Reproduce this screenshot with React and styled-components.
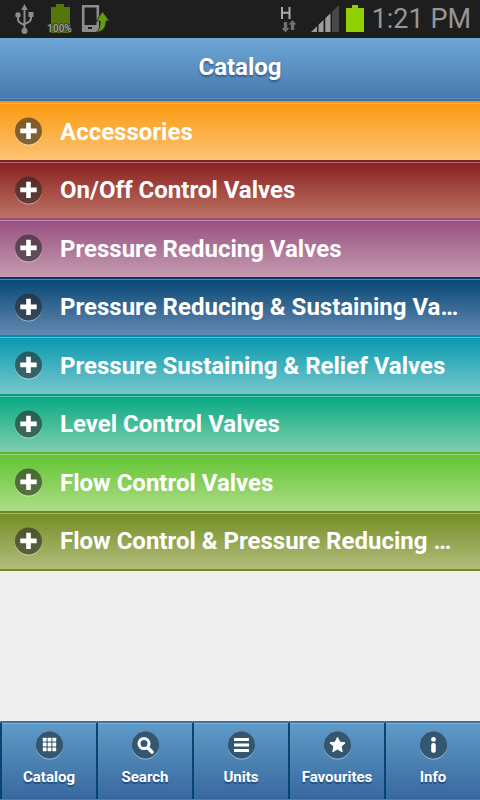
import React, { useState } from "react";
import styled, { createGlobalStyle } from "styled-components";

const GlobalStyle = createGlobalStyle`
  *, *::before, *::after { box-sizing: border-box; }
  html, body { margin: 0; padding: 0; }
  body { background: #efefef; font-family: Roboto, "Noto Sans", sans-serif; }
`;

const Screen = styled.div`
  display: flex;
  flex-direction: column;
  min-height: 100vh;
  background: #efefef;
`;

const StatusBar = styled.div`
  display: flex;
  align-items: center;
  justify-content: space-between;
  height: 38px;
  padding: 0 9px 0 14px;
  background: #1e1e1e;
`;

const StatusGroup = styled.div`
  display: flex;
  align-items: center;
  gap: ${(p) => p.$gap}px;
`;

const Clock = styled.time`
  color: #969696;
  font-size: 27px;
  line-height: 38px;
  font-weight: 400;
  white-space: nowrap;
`;

const Header = styled.header`
  display: flex;
  align-items: center;
  justify-content: center;
  height: 63px;
  padding-bottom: 3px;
  background: linear-gradient(#6da7d5, #4779ad);
  border-bottom: 2px solid #426d9f;
  box-shadow: inset 0 -1px 0 #5886b8;
`;

const Title = styled.h1`
  margin: 0;
  color: #fff;
  font-size: 24px;
  line-height: 28px;
  font-weight: 700;
  text-shadow: 0 2px 2px rgba(20, 50, 90, 0.5);
`;

const List = styled.ul`
  flex: 1;
  margin: 0;
  padding: 0;
  list-style: none;
`;

const Item = styled.li`
  height: 58px;
  &:nth-child(odd) { height: 59px; }
  &:last-child { height: 60px; border-bottom: 2px solid #768b27; }
`;

const Row = styled.button`
  display: flex;
  align-items: center;
  gap: 17px;
  width: 100%;
  height: 100%;
  padding: 0 16px 0 14px;
  border: 0;
  border-top: 2px solid ${(p) => p.$edge};
  background: linear-gradient(${(p) => p.$from}, ${(p) => p.$to});
  box-shadow: inset 0 1px 0 rgba(255, 255, 255, 0.35);
  color: #fff;
  font: 700 24px/28px Roboto, "Noto Sans", sans-serif;
  text-align: left;
  cursor: pointer;
`;

const RowLabel = styled.span`
  flex: 1;
  min-width: 0;
  overflow: hidden;
  text-overflow: ellipsis;
  white-space: nowrap;
`;

const TabBar = styled.nav`
  display: grid;
  grid-template-columns: repeat(5, 1fr);
  height: 79px;
  border-top: 2px solid #41709f;
  border-bottom: 1px solid #487dad;
`;

const Tab = styled.button`
  display: flex;
  flex-direction: column;
  align-items: center;
  gap: 7px;
  min-width: 0;
  padding: 8px 0 0;
  border: 0;
  border-left: 2px solid #07466d;
  background: linear-gradient(#5f9bc8, #38689f);
  box-shadow: inset 0 1px 0 #83b1d5;
  color: #fff;
  font: 700 15px/20px Roboto, "Noto Sans", sans-serif;
  text-shadow: 0 2px 1px #204b80;
  cursor: pointer;
`;

const Icon = styled.svg`
  display: block;
  flex: none;
`;

function Disc({ children, fill = "rgba(38,38,36,.58)" }) {
  return (
    <Icon width="29" height="29" viewBox="0 0 29 29" aria-hidden="true">
      <path d="M1 14a13.5 13.5 0 0 0 27 0v1a13.5 13.5 0 0 1-27 0z" fill="rgba(255,255,255,.5)" />
      <circle cx="14.5" cy="14" r="13.5" fill={fill} />
      {children}
    </Icon>
  );
}

const glyphs = {
  grid: [7.8, 12.6, 17.4].flatMap((y) =>
    [7.8, 12.6, 17.4].map((x) => <rect key={`${x}-${y}`} x={x} y={y - 1} width="3.8" height="3.8" rx=".4" fill="#fff" />)
  ),
  search: (
    <g fill="none" stroke="#fff" strokeLinecap="round">
      <circle cx="13" cy="12.6" r="5" strokeWidth="3" />
      <path d="M17 17l4 4" strokeWidth="3.6" />
    </g>
  ),
  bars: <path d="M7 8.5h15M7 14h15M7 19.5h15" stroke="#fff" strokeWidth="3" />,
  star: (
    <path
      d="M14.5 6.2l2.3 5 5.3.6-4 3.6 1.1 5.4-4.7-2.7-4.7 2.7 1.1-5.4-4-3.6 5.3-.6z"
      fill="#fff" stroke="#fff" strokeWidth="1" strokeLinejoin="round"
    />
  ),
  info: (
    <g fill="#fff">
      <circle cx="14.5" cy="8.4" r="2.4" />
      <rect x="12.2" y="12" width="4.6" height="9.8" rx="2" />
    </g>
  ),
};

function UsbIcon() {
  return (
    <Icon width="21" height="32" viewBox="0 0 21 32" aria-hidden="true">
      <g fill="none" stroke="#8c8c8c" strokeWidth="2">
        <path d="M10.5 5v22M4 13v3q0 3 3 4.3l3.5 1.7M17 12v3q0 3-3 4.3l-3.5 1.7" />
      </g>
      <path d="M10.5 1l3.3 6H7.2z" fill="#8c8c8c" />
      <circle cx="4" cy="12" r="2.7" fill="#8c8c8c" />
      <path d="M14.5 9h5v5h-5z" fill="#8c8c8c" />
      <circle cx="10.5" cy="28" r="3" fill="#8c8c8c" />
    </Icon>
  );
}

function BatteryPercentIcon() {
  return (
    <Icon width="27" height="32" viewBox="0 0 27 32" role="img" aria-label="Battery 100%">
      <path d="M10 1h8v3h6v26H5V4h5z" fill="#54770d" />
      <text x="13.5" y="29" textAnchor="middle" fill="#a3a3a3" stroke="#353b29" strokeWidth="1.5" paintOrder="stroke" fontFamily="Roboto, sans-serif" fontWeight="500" fontSize="10">100%</text>
    </Icon>
  );
}

function TransferIcon() {
  return (
    <Icon width="30" height="32" viewBox="0 0 30 32" aria-hidden="true">
      <path d="M3.2 3.2h14.6v24.6H3.2z" fill="none" stroke="#8c8c8c" strokeWidth="2.6" />
      <path d="M3 22h15v6H3z" fill="#8c8c8c" />
      <path d="M8 24h4v2H8z" fill="#1e1e1e" />
      <path d="M22.5 8.5l7 9.5h-3.4c0 6.5-3 10.6-10 11.4 3.6-2.8 4-5.6 4-11.4h-4z" fill="#679c12" stroke="#1e1e1e" strokeWidth=".8" />
    </Icon>
  );
}

function NetworkIcon() {
  return (
    <Icon width="18" height="32" viewBox="0 0 18 32" aria-hidden="true">
      <path d="M2 4v12M9.5 4v12M2 9.8h7.5" stroke="#ababab" strokeWidth="2" fill="none" />
      <path d="M3.8 19h3.4v6H9.5L5.5 29.5 1.5 25h2.3zM10.8 27h3.4v-5.5H16.5L12.5 17 8.5 21.5h2.3z" fill="#707070" />
    </Icon>
  );
}

function SignalIcon() {
  return (
    <Icon width="28" height="32" viewBox="0 0 28 32" aria-hidden="true">
      <path d="M0 29l6-5.8V29zM7.5 29v-7.2l5-4.9V29zM14.3 29V15.2l5.2-5V29z" fill="#9c9c9c" />
      <path d="M21 29V8.7L28 2v27z" fill="#474747" />
    </Icon>
  );
}

function BatteryIcon() {
  return (
    <Icon width="18" height="32" viewBox="0 0 18 32" aria-hidden="true">
      <path d="M6 2h6v3h6v24H0V5h6z" fill="#91d002" />
    </Icon>
  );
}

const categories = [
  { name: "Accessories", edge: "#f79312", from: "#fb9910", to: "#fcc373" },
  { name: "On/Off Control Valves", edge: "#801c20", from: "#892020", to: "#bd7365" },
  { name: "Pressure Reducing Valves", edge: "#914f79", from: "#985080", to: "#c49bb0" },
  { name: "Pressure Reducing & Sustaining Va…", edge: "#073b65", from: "#084775", to: "#6389b1" },
  { name: "Pressure Sustaining & Relief Valves", edge: "#078fa5", from: "#069ab0", to: "#79c7cc" },
  { name: "Level Control Valves", edge: "#079d78", from: "#06a982", to: "#80ceae" },
  { name: "Flow Control Valves", edge: "#58b733", from: "#61c332", to: "#addd87" },
  { name: "Flow Control & Pressure Reducing …", edge: "#6f8525", from: "#748d25", to: "#b1bd7b" },
];

const tabs = [
  { name: "Catalog", glyph: "grid" },
  { name: "Search", glyph: "search" },
  { name: "Units", glyph: "bars" },
  { name: "Favourites", glyph: "star" },
  { name: "Info", glyph: "info" },
];

export default function App() {
  const [active, setActive] = useState("Catalog");
  return (
    <Screen>
      <GlobalStyle />
      <StatusBar>
        <StatusGroup $gap={7}>
          <StatusGroup $gap={11}>
            <UsbIcon />
            <BatteryPercentIcon />
          </StatusGroup>
          <TransferIcon />
        </StatusGroup>
        <StatusGroup $gap={8}>
          <StatusGroup $gap={7}>
            <StatusGroup $gap={13}>
              <NetworkIcon />
              <SignalIcon />
            </StatusGroup>
            <BatteryIcon />
          </StatusGroup>
          <Clock>1:21 PM</Clock>
        </StatusGroup>
      </StatusBar>
      <Header>
        <Title>Catalog</Title>
      </Header>
      <List>
        {categories.map((c) => (
          <Item key={c.name}>
            <Row type="button" $edge={c.edge} $from={c.from} $to={c.to}>
              <Disc>
                <path d="M14.5 5.7v16.4M6.3 13.9h16.4" stroke="#fff" strokeWidth="4.6" />
              </Disc>
              <RowLabel>{c.name}</RowLabel>
            </Row>
          </Item>
        ))}
      </List>
      <TabBar aria-label="Main">
        {tabs.map((t) => (
          <Tab
            key={t.name}
            type="button"
            aria-current={active === t.name ? "page" : undefined}
            onClick={() => setActive(t.name)}
          >
            <Disc fill="#34566f">{glyphs[t.glyph]}</Disc>
            {t.name}
          </Tab>
        ))}
      </TabBar>
    </Screen>
  );
}
